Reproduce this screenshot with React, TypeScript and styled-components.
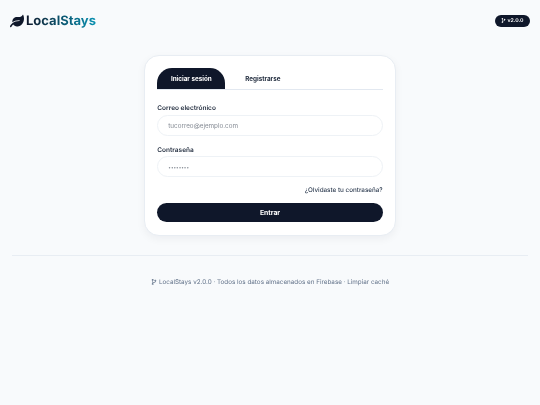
import styled, { createGlobalStyle } from "styled-components";
import { FaCodeBranch, FaLeaf } from "react-icons/fa";

const GlobalStyle = createGlobalStyle`
  html, body {
    margin: 0;
    padding: 0;
    background: #f8fafc;
    font-family: Inter, "Liberation Sans", sans-serif;
    color: #0f172a;
    text-rendering: geometricPrecision;
  }
  * {
    box-sizing: border-box;
  }
`;

const Page = styled.div`
  width: 540px;
  min-height: 405px;
  background: #f8fafc;
  padding: 0 10px;
  opacity: 0.999;
`;

const Header = styled.header`
  height: 41px;
  display: flex;
  align-items: center;
  justify-content: space-between;
`;

const Brand = styled.div`
  display: flex;
  align-items: center;
  gap: 2px;
`;

const LogoMark = styled.span`
  display: flex;
  color: #0f172a;
`;

const BrandName = styled.span`
  font-size: 13px;
  font-weight: 700;
  background: linear-gradient(90deg, #0f172a, #0891b2);
  -webkit-background-clip: text;
  background-clip: text;
  color: transparent;
`;

const VersionBadge = styled.span`
  height: 12px;
  width: 35px;
  display: flex;
  align-items: center;
  justify-content: center;
  gap: 1px;
  border-radius: 6px;
  background: #0f172a;
  color: #fff;
  font-size: 5.25px;
  font-weight: 600;
`;

const Main = styled.main`
  display: flex;
  justify-content: center;
  padding-top: 13.5px;
`;

const Card = styled.section`
  width: 252px;
  height: 181px;
  padding: 12.5px 12.3px 14px;
  background: #fff;
  border: 1px solid #e8edf3;
  border-radius: 15px;
  box-shadow: 0 3px 9px rgba(15, 23, 42, 0.05);
`;

const Tabs = styled.div`
  display: flex;
  height: 22px;
  border-bottom: 1px solid #e2e8f0;
  margin-bottom: 14px;
`;

const Tab = styled.button<{ $active?: boolean }>`
  width: ${({ $active }) => ($active ? "68px" : "75px")};
  height: 21px;
  padding: 0;
  border: 0;
  border-radius: 15px 15px 0 0;
  background: ${({ $active }) => ($active ? "#0f172a" : "transparent")};
  color: ${({ $active }) => ($active ? "#fff" : "#1e293b")};
  font-family: inherit;
  font-size: 6.3px;
  font-weight: 700;
`;

const Field = styled.div`
  margin-bottom: 10px;
`;

const Label = styled.label`
  display: block;
  font-size: 6.5px;
  font-weight: 600;
  line-height: 9px;
  margin-bottom: 1.5px;
  color: #1e293b;
`;

const Input = styled.input<{ $secret?: boolean }>`
  display: block;
  width: 100%;
  height: 21px;
  padding: 1px 10px 0;
  background: #fff;
  border: 1px solid #eef2f6;
  border-radius: 11px;
  outline: none;
  font-family: inherit;
  font-size: ${({ $secret }) => ($secret ? "4.6px" : "6.3px")};
  color: #64748b;

  &::placeholder {
    color: #858b94;
    opacity: 1;
  }
`;

const ForgotRow = styled.div`
  display: flex;
  justify-content: flex-end;
  margin-top: -2px;
  margin-bottom: 8px;
`;

const ForgotLink = styled.a`
  font-size: 6.3px;
  font-weight: 500;
  line-height: 10px;
  color: #334155;
`;

const SubmitButton = styled.button`
  display: block;
  width: 100%;
  height: 19px;
  padding: 0 0 1px;
  border: 0;
  border-radius: 10px;
  background: #0f172a;
  color: #fff;
  font-family: inherit;
  font-size: 6.8px;
  font-weight: 700;
`;

const Footer = styled.footer`
  margin: 19.5px 2px 0;
  padding-top: 20.5px;
  border-top: 1px solid #e8edf3;
  display: flex;
  align-items: center;
  justify-content: center;
  gap: 2px;
  font-size: 6.3px;
  line-height: 10px;
  color: #64748b;
`;

export default function App() {
  return (
    <Page>
      <GlobalStyle />
      <Header>
        <Brand>
          <LogoMark>
            <FaLeaf size={14} />
          </LogoMark>
          <BrandName>LocalStays</BrandName>
        </Brand>
        <VersionBadge>
          <FaCodeBranch size={5} />
          v2.0.0
        </VersionBadge>
      </Header>
      <Main>
        <Card>
          <Tabs>
            <Tab $active>Iniciar sesión</Tab>
            <Tab>Registrarse</Tab>
          </Tabs>
          <Field>
            <Label>Correo electrónico</Label>
            <Input type="email" placeholder="tucorreo@ejemplo.com" />
          </Field>
          <Field>
            <Label>Contraseña</Label>
            <Input $secret type="password" placeholder="••••••••" />
          </Field>
          <ForgotRow>
            <ForgotLink>¿Olvidaste tu contraseña?</ForgotLink>
          </ForgotRow>
          <SubmitButton>Entrar</SubmitButton>
        </Card>
      </Main>
      <Footer>
        <FaCodeBranch size={6} />
        LocalStays v2.0.0 · Todos los datos almacenados en Firebase · Limpiar caché
      </Footer>
    </Page>
  );
}
